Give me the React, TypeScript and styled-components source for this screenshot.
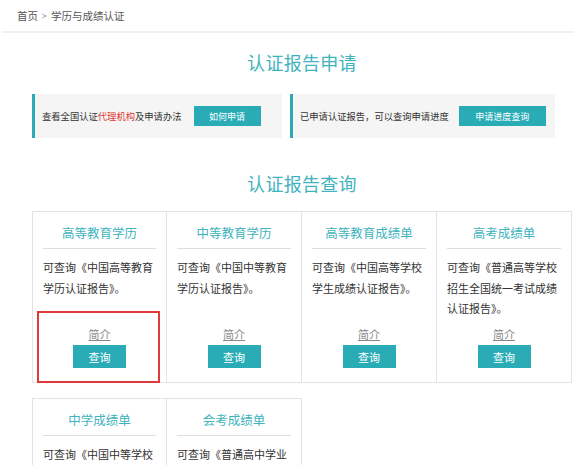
import React from "react";
import styled, { createGlobalStyle } from "styled-components";

const Global = createGlobalStyle`
  html, body { margin: 0; padding: 0; background: #fff; }
  body { font-family: "Noto Sans CJK SC", "Microsoft YaHei", sans-serif; color: #333; }
  * { box-sizing: border-box; }
`;

const Page = styled.div`
  width: 574px;
  height: 465px;
  overflow: hidden;
`;

const Breadcrumb = styled.div`
  margin-left: 2px;
  height: 33px;
  padding-left: 15px;
  display: flex;
  align-items: center;
  gap: 4px;
  font-size: 10.5px;
  color: #555;
  border-bottom: 2px solid #f0f0f0;
`;

const Sep = styled.span`
  color: #888;
  font-size: 9px;
`;

const Content = styled.div`
  margin-left: 32px;
  width: 540px;
`;

const SectionTitle = styled.h2<{ $top: number }>`
  margin: ${(p) => p.$top}px 0 0;
  font-size: 18px;
  line-height: 24px;
  font-weight: normal;
  color: #40b3be;
  text-align: center;
  letter-spacing: 0.3px;
`;

const ApplyRow = styled.div`
  margin-top: 20px;
  display: flex;
  gap: 8px;
`;

const ApplyCard = styled.div<{ $w: number; $gap: number }>`
  width: ${(p) => p.$w}px;
  height: 44px;
  background: #f5f5f5;
  border-left: 3px solid #2aabb6;
  display: flex;
  align-items: center;
  padding-left: 7px;
  gap: ${(p) => p.$gap}px;
  font-size: 9.3px;
  color: #333;
  white-space: nowrap;
`;

const Red = styled.span`
  color: #e0342f;
`;

const ApplyButton = styled.button<{ $w: number }>`
  width: ${(p) => p.$w}px;
  height: 20px;
  border: none;
  background: #2aacb7;
  color: #fff;
  font-family: inherit;
  font-size: 9px;
  padding: 0;
  cursor: pointer;
`;

const Grid = styled.div<{ $top: number }>`
  margin-top: ${(p) => p.$top}px;
  display: grid;
  grid-template-columns: repeat(4, 135px);
`;

const Cell = styled.div<{ $first?: boolean }>`
  position: relative;
  height: 172px;
  border: 1px solid #e3e3e3;
  border-left: ${(p) => (p.$first ? "1px solid #e3e3e3" : "none")};
  padding: 0 10px;
  display: flex;
  flex-direction: column;
`;

const CellTitle = styled.div`
  margin-top: 11px;
  padding-bottom: 6px;
  border-bottom: 1px solid #dedede;
  text-align: center;
  font-size: 12.5px;
  line-height: 19px;
  color: #40b3be;
`;

const Desc = styled.div`
  margin-top: 8px;
  font-size: 11px;
  line-height: 20.5px;
  color: #333;
`;

const CellFoot = styled.div`
  margin-top: auto;
  padding-bottom: 14px;
  display: flex;
  flex-direction: column;
  align-items: center;
  gap: 4px;
`;

const Intro = styled.a`
  font-size: 11px;
  line-height: 14px;
  color: #888;
  text-decoration: underline;
`;

const QueryButton = styled.button`
  width: 53px;
  height: 23px;
  border: none;
  background: #2aacb7;
  color: #fff;
  font-family: inherit;
  font-size: 11px;
  padding: 0;
`;

const Highlight = styled.div`
  position: absolute;
  left: 4px;
  top: 99px;
  width: 123px;
  height: 72px;
  border: 2px solid #e0393b;
  pointer-events: none;
`;

type Item = { title: string; desc: string; mark?: boolean };

const row1: Item[] = [
  { title: "高等教育学历", desc: "可查询《中国高等教育学历认证报告》。", mark: true },
  { title: "中等教育学历", desc: "可查询《中国中等教育学历认证报告》。" },
  { title: "高等教育成绩单", desc: "可查询《中国高等学校学生成绩认证报告》。" },
  { title: "高考成绩单", desc: "可查询《普通高等学校招生全国统一考试成绩认证报告》。" },
];

const row2: Item[] = [
  { title: "中学成绩单", desc: "可查询《中国中等学校学生成绩认证报告》。" },
  { title: "会考成绩单", desc: "可查询《普通高中学业水平考试成绩认证报告》。" },
];

const Card = ({ item, first }: { item: Item; first?: boolean }) => (
  <Cell $first={first}>
    <CellTitle>{item.title}</CellTitle>
    <Desc>{item.desc}</Desc>
    <CellFoot>
      <Intro>简介</Intro>
      <QueryButton>查询</QueryButton>
    </CellFoot>
    {item.mark && <Highlight />}
  </Cell>
);

export default function App() {
  return (
    <Page>
      <Global />
      <Breadcrumb>
        <span>首页</span>
        <Sep>&gt;</Sep>
        <span>学历与成绩认证</span>
      </Breadcrumb>
      <Content>
        <SectionTitle $top={17}>认证报告申请</SectionTitle>
        <ApplyRow>
          <ApplyCard $w={250} $gap={12}>
            <span>
              查看全国认证<Red>代理机构</Red>及申请办法
            </span>
            <ApplyButton $w={67}>如何申请</ApplyButton>
          </ApplyCard>
          <ApplyCard $w={265} $gap={10}>
            <span>已申请认证报告，可以查询申请进度</span>
            <ApplyButton $w={87}>申请进度查询</ApplyButton>
          </ApplyCard>
        </ApplyRow>
        <SectionTitle $top={33}>认证报告查询</SectionTitle>
        <Grid $top={16}>
          {row1.map((it, i) => (
            <Card key={it.title} item={it} first={i === 0} />
          ))}
        </Grid>
        <Grid $top={15}>
          {row2.map((it, i) => (
            <Card key={it.title} item={it} first={i === 0} />
          ))}
        </Grid>
      </Content>
    </Page>
  );
}
